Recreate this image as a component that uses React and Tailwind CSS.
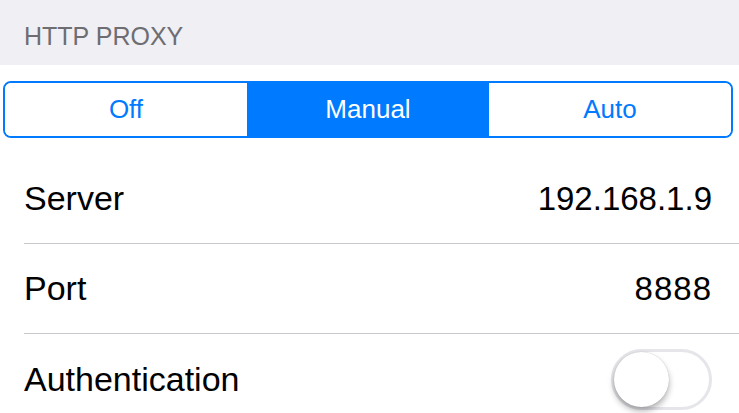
import React from 'react';

const Row = ({ label, children, last }) => (
    <div className="flex h-[90px] items-center pl-6">
        <div className={`flex h-full flex-1 items-center justify-between pr-[27px] ${last ? '' : 'border-b border-[#c8c7cc]'}`}>
            <span className="text-[34px] text-black">{label}</span>
            {children}
        </div>
    </div>
);

const App = () => {
    const modes = ['Off', 'Manual', 'Auto'];
    const active = 'Manual';

    return (
        <div className="h-[413px] w-[739px] overflow-hidden bg-white" style={{ fontFamily: '"Liberation Sans", Arial, sans-serif' }}>
            <div className="flex h-[65px] items-center bg-[#efeff4] pl-6 pt-2">
                <span className="text-[25px] text-[#6d6d72]">HTTP PROXY</span>
            </div>

            <div className="mt-4 ml-[3px] mr-[6px] flex h-[57px] overflow-hidden rounded-lg border-2 border-[#007aff]">
                {modes.map((m) => (
                    <div
                        key={m}
                        className={`flex flex-1 items-center justify-center text-[26px] ${m === active ? 'bg-[#007aff] text-white' : 'bg-white text-[#007aff]'}`}
                    >
                        {m}
                    </div>
                ))}
            </div>

            <div className="mt-4">
                <Row label="Server">
                    <span className="text-[33px] text-black">192.168.1.9</span>
                </Row>
                <Row label="Port">
                    <span className="text-[33px] tracking-[1px] text-black">8888</span>
                </Row>
                <Row label="Authentication" last>
                    <div className="relative h-[61px] w-[101px] rounded-full border-[3px] border-[#e5e5ea] bg-white">
                        <div className="absolute left-0 top-0 h-[55px] w-[55px] rounded-full bg-white shadow-[0_4px_6px_rgba(0,0,0,0.3),0_0_1px_rgba(0,0,0,0.25)]" />
                    </div>
                </Row>
            </div>
        </div>
    );
};

export default App;
